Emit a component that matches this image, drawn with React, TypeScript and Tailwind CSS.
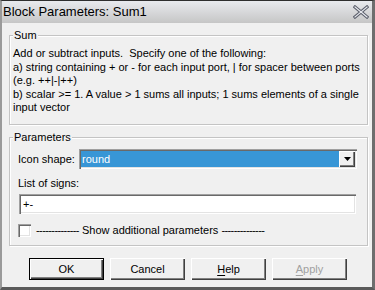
import React from "react";

const font = { fontFamily: '"Liberation Sans", Arial, sans-serif' };

function Group({ title, className, children }: { title: string; className?: string; children: React.ReactNode }) {
  return (
    <div className={`relative border border-[#c4c4c4] shadow-[inset_1px_1px_0_#ffffff,1px_1px_0_#ffffff] ${className ?? ""}`}>
      <span className="absolute -top-[8px] left-[3px] bg-[#f0f0f0] px-[1px] text-[11px] leading-[14px] text-black">
        {title}
      </span>
      {children}
    </div>
  );
}

function Button({ label, underline, isDefault, disabled }: { label: string; underline?: boolean; isDefault?: boolean; disabled?: boolean }) {
  const first = label.charAt(0);
  const rest = label.slice(1);
  return (
    <button
      className={`h-[22px] w-[75px] bg-[#f0f0f0] text-[11px] ${
        isDefault
          ? "border border-black shadow-[inset_1px_1px_0_#ffffff,inset_-1px_-1px_0_#404040,inset_-2px_-2px_0_#808080]"
          : "shadow-[inset_1px_1px_0_#ffffff,inset_-1px_-1px_0_#404040,inset_-2px_-2px_0_#808080]"
      } ${disabled ? "text-[#a0a0a0]" : "text-black"}`}
    >
      {underline ? (
        <>
          <span className="underline underline-offset-2">{first}</span>
          {rest}
        </>
      ) : (
        label
      )}
    </button>
  );
}

export default function App() {
  return (
    <div
      className="flex h-[290px] w-[375px] flex-col border-t border-t-[#2e2e2e] border-l-2 border-l-[#9a9a9a] border-r-3 border-r-[#6e6e6e] border-b-3 border-b-[#5a5a5a] bg-[#f0f0f0]"
      style={font}
    >
      {/* title bar */}
      <div className="flex h-[22px] items-center justify-between bg-gradient-to-b from-[#e8eaee] to-[#c6c6c6] pl-[1px] pr-[3px]">
        <span className="text-[13px] text-black">Block Parameters: Sum1</span>
        <svg width="16" height="14" viewBox="0 0 16 14">
          <path d="M2 2 L14 12 M14 2 L2 12" stroke="#5a5e6a" strokeWidth="3.2" strokeLinecap="square" />
          <path d="M2 2 L14 12 M14 2 L2 12" stroke="#e8eaf0" strokeWidth="1.2" strokeLinecap="square" />
        </svg>
      </div>

      <div className="flex flex-1 flex-col pl-[7px] pr-[4px] text-[11px] text-black">
        {/* Sum */}
        <Group title="Sum" className="mt-[12px] h-[90px] pl-[3px] pt-[11px]">
          <p className="leading-[13.5px]">
            Add or subtract inputs.&nbsp; Specify one of the following:
            <br />
            a) string containing + or - for each input port, | for spacer between ports
            <br />
            (e.g. ++|-|++)
            <br />
            b) scalar &gt;= 1. A value &gt; 1 sums all inputs; 1 sums elements of a single
            <br />
            input vector
          </p>
        </Group>

        {/* Parameters */}
        <Group title="Parameters" className="mt-[12px] h-[109px] pl-[8px] pr-[10px] pt-[11px]">
          <div className="flex items-center">
            <span className="w-[61px]">Icon shape:</span>
            <div className="flex h-[20px] flex-1 items-stretch bg-white p-[2px] shadow-[inset_1px_1px_0_#a0a0a0,inset_2px_2px_0_#696969,inset_-1px_-1px_0_#ffffff,inset_-2px_-2px_0_#e3e3e3]">
              <div className="flex flex-1 items-center bg-[#3896d6] pl-[1px] text-white">round</div>
              <div className="flex w-[16px] items-center justify-center bg-[#f0f0f0] shadow-[inset_1px_1px_0_#ffffff,inset_-1px_-1px_0_#404040,inset_-2px_-2px_0_#808080]">
                <svg width="7" height="4" viewBox="0 0 7 4">
                  <path d="M0 0 H7 L3.5 4 Z" fill="#000" />
                </svg>
              </div>
            </div>
          </div>
          <div className="mt-[7px] leading-[14px]">List of signs:</div>
          <div className="mt-[4px] ml-[1px] mr-[1px] flex h-[20px] items-center bg-white pl-[4px] shadow-[inset_1px_1px_0_#a0a0a0,inset_2px_2px_0_#696969,inset_-1px_-1px_0_#ffffff,inset_-2px_-2px_0_#e3e3e3]">
            +-
          </div>
          <div className="mt-[8px] flex items-center">
            <div className="h-[13px] w-[13px] bg-white shadow-[inset_1px_1px_0_#a0a0a0,inset_2px_2px_0_#696969,inset_-1px_-1px_0_#ffffff,inset_-2px_-2px_0_#e3e3e3]" />
            <span className="ml-[5px]">
              <span className="tracking-[-0.6px]">--------------</span> Show additional parameters{" "}
              <span className="tracking-[-0.6px]">--------------</span>
            </span>
          </div>
        </Group>

        {/* buttons */}
        <div className="mt-[12px] flex gap-[6px] pl-[20px]">
          <Button label="OK" isDefault />
          <Button label="Cancel" />
          <Button label="Help" underline />
          <Button label="Apply" underline disabled />
        </div>
      </div>
    </div>
  );
}
